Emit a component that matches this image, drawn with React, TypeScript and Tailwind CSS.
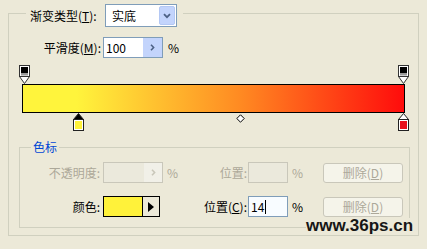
import React from "react";

function TopStop({ className }: { className: string }) {
  return (
    <svg className={className} width="11" height="19" viewBox="0 0 11 19">
      <path d="M0.5 11.5 L5.5 18.5 L10.5 11.5 Z" fill="#ffffff" stroke="#333333" strokeWidth="1" />
      <rect x="0.5" y="0.5" width="10" height="11" fill="#ffffff" stroke="#333333" strokeWidth="1" />
      <rect x="2" y="2" width="7" height="6" fill="#000000" />
      <rect x="2" y="8" width="7" height="2.5" fill="#9a9a9a" />
    </svg>
  );
}

function BottomStop({ className, color, selected }: { className: string; color: string; selected?: boolean }) {
  return (
    <svg className={className} width="11" height="18" viewBox="0 0 11 18">
      <path d="M5.5 0.5 L10.5 6.5 L0.5 6.5 Z" fill={selected ? "#000000" : "#ffffff"} stroke="#222222" strokeWidth="1" />
      <rect x="0.5" y="6.5" width="10" height="11" fill="#ffffff" stroke="#222222" strokeWidth="1" />
      <rect x="2" y="8" width="7" height="8" fill={color} />
    </svg>
  );
}

function RightChevron({ color }: { color: string }) {
  return (
    <svg width="5" height="7" viewBox="0 0 5 7">
      <path d="M1 0.8 L3.6 3.5 L1 6.2" fill="none" stroke={color} strokeWidth="1.6" />
    </svg>
  );
}

function DelButton() {
  return (
    <div className="ml-[19px] flex h-[20px] w-[80px] items-center justify-center rounded-[3px] border border-[#c9c7ba] bg-[#f5f4ea] text-[#aca899]">
      删除(<u>D</u>)
    </div>
  );
}

export default function App() {
  return (
    <div className="relative h-[249px] w-[427px] overflow-hidden bg-[#ece9d8] pl-[8px] pt-[4px] font-['Noto_Sans_CJK_SC','Noto_Sans',sans-serif] text-[12px] leading-[14px] text-black">
      <fieldset className="h-[232px] w-[411px] border border-[#d0d0bf]">
        <legend className="ml-[17px] h-[18px] pl-[4px] pr-[6px]">
          <div className="flex items-start">
            <span className="w-[71px] whitespace-nowrap pt-[5px]">
              渐变类型(<u>T</u>):
            </span>
            <div className="ml-[4px] flex h-[23px] w-[72px] items-center border border-[#7f9db9] bg-white">
              <span className="flex-1 pl-[6px]">实底</span>
              <span className="mr-[1px] flex h-[19px] w-[16px] items-center justify-center rounded-[2px] border border-[#b4c8f4] bg-[#c3d4fc]">
                <svg width="8" height="6" viewBox="0 0 8 6">
                  <path d="M1 1.2 L4 4.2 L7 1.2" fill="none" stroke="#4d6185" strokeWidth="1.8" />
                </svg>
              </span>
            </div>
          </div>
        </legend>

        <div className="mt-[15px] flex h-[21px] items-center">
          <span className="w-[92px] whitespace-nowrap text-right">
            平滑度(<u>M</u>):
          </span>
          <div className="ml-[2px] flex h-[21px] w-[60px] items-center border border-[#7f9db9] bg-white">
            <span className="flex-1 pl-[2px]">100</span>
            <span className="flex h-[19px] w-[19px] items-center justify-center bg-[#c3d4fc]">
              <RightChevron color="#4d6185" />
            </span>
          </div>
          <span className="ml-[5px]">%</span>
        </div>

        <div className="relative ml-[5px] mt-[7px] h-[67px] w-[400px] pt-[19px]">
          <div className="ml-[8px] h-[29px] w-[383px] border border-black bg-[linear-gradient(to_right,#fff43c_0%,#fff43c_14%,#ff8a22_57%,#ff0c0c_100%)]" />
          <TopStop className="absolute left-[5px] top-0" />
          <TopStop className="absolute left-[384px] top-0" />
          <BottomStop className="absolute left-[59px] top-[48px]" color="#fff23a" selected />
          <BottomStop className="absolute left-[384px] top-[48px]" color="#e8101c" />
          <svg className="absolute left-[222px] top-[49px]" width="9" height="9" viewBox="0 0 9 9">
            <path d="M4.5 0.8 L8.2 4.5 L4.5 8.2 L0.8 4.5 Z" fill="#ffffff" stroke="#000000" strokeWidth="1" />
          </svg>
        </div>

        <fieldset className="ml-[10px] mt-[8px] h-[88px] w-[391px] border border-[#d0d0bf]">
          <legend className="ml-[11px] px-[2px] text-[#0046d5]">色标</legend>

          <div className="mt-[8px] flex h-[21px] items-center">
            <span className="w-[80px] whitespace-nowrap text-right text-[#aca899]">不透明度:</span>
            <div className="ml-[3px] flex h-[21px] w-[60px] items-center justify-end border border-[#c9c7ba] bg-[#ebe9dc]">
              <span className="flex h-[19px] w-[18px] items-center justify-center bg-[#f1f0e8]">
                <RightChevron color="#c9c7ba" />
              </span>
            </div>
            <span className="ml-[4px] w-[12px] text-[#aca899]">%</span>
            <span className="w-[68px] whitespace-nowrap text-right text-[#aca899]">位置:</span>
            <div className="ml-[1px] h-[21px] w-[40px] border border-[#c9c7ba] bg-[#ebe9dc]" />
            <span className="ml-[4px] w-[12px] text-[#aca899]">%</span>
            <DelButton />
          </div>

          <div className="mt-[13px] flex h-[21px] items-center">
            <span className="w-[80px] whitespace-nowrap text-right">颜色:</span>
            <div className="ml-[3px] flex h-[21px] w-[57px] border border-black">
              <span className="w-[39px] border-r border-black bg-[#fff23a]" />
              <span className="flex flex-1 items-center justify-center bg-[#ece9d8]">
                <svg width="6" height="10" viewBox="0 0 6 10">
                  <path d="M0 0 L6 5 L0 10 Z" fill="#000000" />
                </svg>
              </span>
            </div>
            <span className="ml-[19px] w-[68px] whitespace-nowrap text-right">
              位置(<u>C</u>):
            </span>
            <div className="ml-[1px] flex h-[21px] w-[40px] items-center border border-[#7f9db9] bg-[#f8fcff] pl-[2px]">
              <span>14</span>
              <span className="ml-[1px] h-[14px] w-[1px] bg-black" />
            </div>
            <span className="ml-[4px] w-[12px]">%</span>
            <DelButton />
          </div>
        </fieldset>
      </fieldset>

      <div className="absolute left-[306px] top-[218px] bg-[#ece9d8] font-['Liberation_Sans',Arial,sans-serif] text-[17px] font-bold leading-[16px] text-[#161616]">
        www.36ps.cn
      </div>
    </div>
  );
}
